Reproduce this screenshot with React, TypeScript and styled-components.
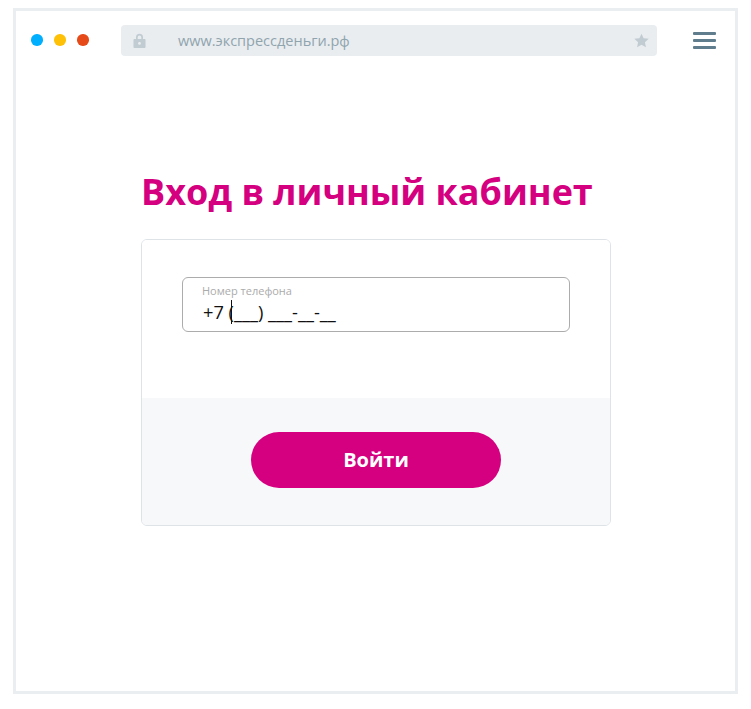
import React from 'react';
import styled, { createGlobalStyle } from 'styled-components';

const GlobalStyle = createGlobalStyle`
  html, body {
    margin: 0;
    padding: 0;
    background: #fff;
    font-family: "Open Sans", "Liberation Sans", sans-serif;
  }
`;

const Page = styled.div`
  box-sizing: border-box;
  width: 751px;
  height: 709px;
  padding: 8px 13px 15px;
`;

const Frame = styled.div`
  box-sizing: border-box;
  width: 725px;
  height: 686px;
  border: 3px solid #ebeef0;
  display: flex;
  flex-flow: column;
`;

const Toolbar = styled.div`
  display: flex;
  align-items: center;
  height: 31px;
  margin-top: 14px;
  padding: 0 19px 0 15px;
`;

const Dots = styled.div`
  display: flex;
  gap: 11.5px;
  width: 90px;
  margin-top: -1px;
`;

const Dot = styled.span<{ $color: string }>`
  width: 11.5px;
  height: 11.5px;
  border-radius: 50%;
  background: ${(p) => p.$color};
`;

const AddressBar = styled.div`
  box-sizing: border-box;
  width: 536px;
  height: 31px;
  border-radius: 4px;
  background: #e9edf0;
  display: flex;
  align-items: center;
  padding: 0 8px 0 12px;
  color: #90a4ae;
  font-size: 14.5px;
`;

const Url = styled.span`
  flex: 1;
  margin-left: 32px;
`;

const MenuButton = styled.div`
  margin-left: auto;
  display: flex;
  flex-flow: column;
  gap: 4px;
  width: 23px;

  span {
    height: 3px;
    background: #5f7d8c;
    border-radius: 1px;
  }
`;

const Main = styled.div`
  width: 470px;
  margin: 111px 0 0 125px;
`;

const Title = styled.h1`
  margin: 0 0 23px;
  color: #d5007f;
  font-size: 36px;
  font-weight: 700;
  line-height: 49px;
  letter-spacing: -0.03px;
  white-space: nowrap;
`;

const Card = styled.div`
  box-sizing: border-box;
  height: 287px;
  border: 1px solid #dee3e8;
  border-radius: 6px;
  overflow: hidden;
  display: flex;
  flex-flow: column;
`;

const CardBody = styled.div`
  box-sizing: border-box;
  height: 158px;
  padding: 37px 40px 0;
  background: #fff;
`;

const Field = styled.div`
  position: relative;
  box-sizing: border-box;
  height: 55px;
  border: 1px solid #acacac;
  border-radius: 6px;
  padding: 6px 19px 0;
`;

const FieldLabel = styled.div`
  color: #ababab;
  font-size: 11px;
  line-height: 14px;
`;

const FieldValue = styled.div`
  color: #111;
  font-size: 18.25px;
  line-height: 24px;
  margin: 2px 0 0 1px;
  white-space: nowrap;
`;

const Caret = styled.span`
  position: absolute;
  left: 48px;
  top: 22px;
  width: 1px;
  height: 24px;
  background: #111;
`;

const CardFooter = styled.div`
  flex: 1;
  background: #f7f8fa;
  display: flex;
  justify-content: center;
  padding-top: 34px;
`;

const SubmitButton = styled.button`
  width: 250px;
  height: 56px;
  border: 0;
  border-radius: 28px;
  background: #d5007f;
  color: #fff;
  font-family: inherit;
  font-size: 20px;
  font-weight: 700;
  padding: 0 0 2px;
`;

export default function App() {
  return (
    <Page>
      <GlobalStyle />
      <Frame>
        <Toolbar>
          <Dots>
            <Dot $color="#00b0ff" />
            <Dot $color="#ffc107" />
            <Dot $color="#e64a19" />
          </Dots>
          <AddressBar>
            <svg width="13" height="15" viewBox="0 0 13 15">
              <path
                fill="#c1ccd2"
                fillRule="evenodd"
                d="M3 6V4.2a3.5 3.5 0 0 1 7 0V6h1.5c.6 0 1 .4 1 1v7c0 .6-.4 1-1 1h-10c-.6 0-1-.4-1-1V7c0-.6.4-1 1-1H3zm1.7 0h3.6V4.2a1.8 1.8 0 0 0-3.6 0V6zm1.8 3a1.4 1.4 0 1 0 0 2.8 1.4 1.4 0 0 0 0-2.8z"
              />
            </svg>
            <Url>www.экспрессденьги.рф</Url>
            <svg width="15" height="15" viewBox="0 0 24 24">
              <path
                fill="#c1ccd2"
                d="M12 1l3.4 7.4 8.1.9-6 5.5 1.6 8L12 18.8 4.9 22.8l1.6-8-6-5.5 8.1-.9z"
              />
            </svg>
          </AddressBar>
          <MenuButton>
            <span />
            <span />
            <span />
          </MenuButton>
        </Toolbar>
        <Main>
          <Title>Вход в личный кабинет</Title>
          <Card>
            <CardBody>
              <Field>
                <FieldLabel>Номер телефона</FieldLabel>
                <FieldValue>+7 (___) ___-__-__</FieldValue>
                <Caret />
              </Field>
            </CardBody>
            <CardFooter>
              <SubmitButton>Войти</SubmitButton>
            </CardFooter>
          </Card>
        </Main>
      </Frame>
    </Page>
  );
}
